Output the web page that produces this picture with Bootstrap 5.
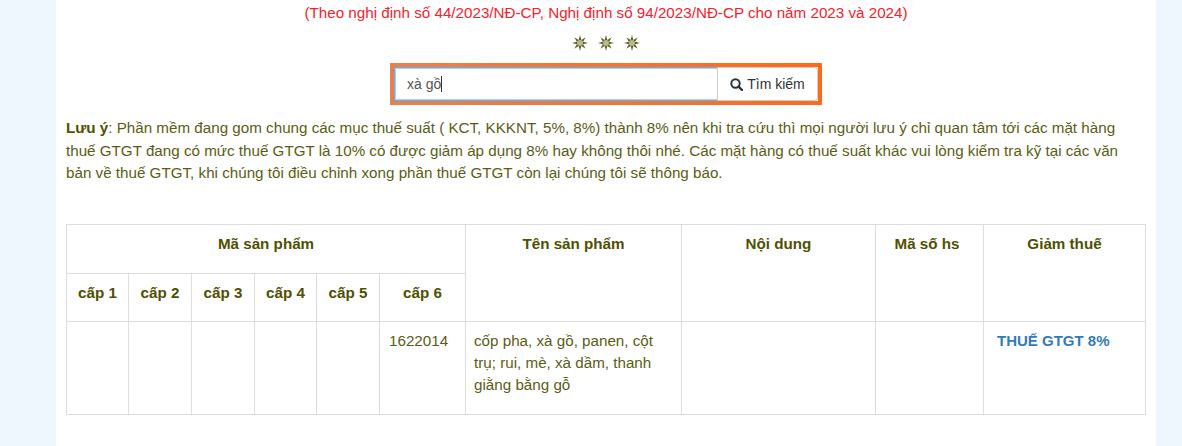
<!DOCTYPE html>
<html lang="vi">
<head>
  <meta charset="UTF-8" />
  <title>Tra cứu thuế GTGT</title>
  <link href="https://cdn.jsdelivr.net/npm/bootstrap@5.3.0/dist/css/bootstrap.min.css" rel="stylesheet" />
  <style>
    html, body { height: 446px; overflow: hidden; }
    body { background: #eff7fe; font-family: "Liberation Sans", Arial, sans-serif; font-size: 15.2px; color: #5c5d14; }
    .khung { width: 1100px; height: 446px; margin-left: 56px; background: #fff; padding: 0 10px; }
    .tieu-de { color: #f5222d; font-size: 15.2px; line-height: 20px; padding-top: 3px; text-align: center; }
    .hang-sao { gap: 10px; margin-top: 10px; height: 20px; }
    .hop-tim { width: 432px; height: 42px; margin: 10px auto 0; border: 4px solid; border-image: linear-gradient(90deg, #e8804d, #ff6a1a) 1; }
    .hop-tim .input-group { height: 34px; }
    .o-nhap { height: 34px; border-radius: 0; border: 1px solid #66afe9; border-right: 0; font-size: 14px; color: #555; padding: 4px 12px; box-shadow: inset 0 0 0 1px #a9d2f1; caret-color: transparent; }
    .o-nhap:focus { border-color: #66afe9; box-shadow: inset 0 0 0 1px #a9d2f1; }
    .con-tro { position: absolute; left: 48px; top: 9px; width: 1px; height: 16px; background: #333; z-index: 5; }
    .nut-tim { width: 101px; height: 34px; padding: 0; font-size: 14px; color: #333; background: #fff; border: 1px solid #ccc; border-radius: 0 4px 4px 0; }
    .luu-y { margin: 12px 0 0; line-height: 22.5px; font-size: 15.2px; }
    .luu-y strong { color: #4f5000; }
    .bang-sp { width: 1079px; margin: 39px 0 0; table-layout: fixed; --bs-table-color: #5c5d14; --bs-table-border-color: #ddd; }
    .bang-sp th, .bang-sp td { padding: 8px 9px; line-height: 22px; font-size: 15.2px; vertical-align: top; }
    .bang-sp th { text-align: center; font-weight: 700; color: #4f5000; }
    .bang-sp .dong-1 th { height: 49px; }
    .bang-sp .dong-2 th { height: 48px; }
    .bang-sp .dong-3 td { height: 93px; }
    .bang-sp .o-ten { padding-left: 8px; }
    .bang-sp .o-hs { padding-right: 14px; }
    .bang-sp .thue-xanh { color: #337ab7; font-weight: 700; font-size: 15px; padding-left: 13px; }
  </style>
</head>
<body>
  <div class="khung">
    <div class="tieu-de">(Theo nghị định số 44/2023/NĐ-CP, Nghị định số 94/2023/NĐ-CP cho năm 2023 và 2024)</div>

    <div class="hang-sao d-flex justify-content-center align-items-center">
      <svg width="16" height="16" viewBox="0 0 16 16"><path d="M8 0l1.300 4.900L13.700 2.300 11.100 6.700 16 8l-4.900 1.300 2.600 4.400-4.400-2.600L8 16l-1.300-4.900-4.400 2.600 2.600-4.400L0 8l4.900-1.300L2.300 2.300l4.400 2.600z" fill="#5f5f28"/><circle cx="8" cy="8" r="3" fill="#b9b990"/></svg>
      <svg width="16" height="16" viewBox="0 0 16 16"><path d="M8 0l1.300 4.900L13.700 2.300 11.100 6.700 16 8l-4.900 1.300 2.600 4.400-4.400-2.600L8 16l-1.300-4.900-4.400 2.600 2.600-4.400L0 8l4.900-1.300L2.300 2.300l4.400 2.600z" fill="#5f5f28"/><circle cx="8" cy="8" r="3" fill="#b9b990"/></svg>
      <svg width="16" height="16" viewBox="0 0 16 16"><path d="M8 0l1.300 4.900L13.700 2.300 11.100 6.700 16 8l-4.900 1.300 2.600 4.400-4.400-2.600L8 16l-1.300-4.900-4.400 2.600 2.600-4.400L0 8l4.900-1.300L2.300 2.300l4.400 2.600z" fill="#5f5f28"/><circle cx="8" cy="8" r="3" fill="#b9b990"/></svg>
    </div>

    <div class="hop-tim">
      <div class="input-group flex-nowrap position-relative">
        <input type="text" class="form-control o-nhap" value="xà gồ" />
        <span class="con-tro"></span>
        <button type="button" class="btn nut-tim d-flex align-items-center justify-content-center gap-1">
          <svg width="13" height="13" viewBox="0 0 13 13"><circle cx="5.500" cy="5.500" r="4.200" fill="none" stroke="#27333f" stroke-width="2"/><path d="M8.600 8.600l3.400 3.400" stroke="#27333f" stroke-width="2.400" stroke-linecap="round"/></svg>
          Tìm kiếm
        </button>
      </div>
    </div>

    <p class="luu-y"><strong>Lưu ý</strong>: Phần mềm đang gom chung các mục thuế suất ( KCT, KKKNT, 5%, 8%) thành 8% nên khi tra cứu thì mọi người lưu ý chỉ quan tâm tới các mặt hàng thuế GTGT đang có mức thuế GTGT là 10% có được giảm áp dụng 8% hay không thôi nhé. Các mặt hàng có thuế suất khác vui lòng kiểm tra kỹ tại các văn bản về thuế GTGT, khi chúng tôi điều chỉnh xong phần thuế GTGT còn lại chúng tôi sẽ thông báo.</p>

    <table class="table table-bordered bang-sp">
      <colgroup>
        <col style="width:62px"><col style="width:63px"><col style="width:63px"><col style="width:62px"><col style="width:63px"><col style="width:86px"><col style="width:216px"><col style="width:194px"><col style="width:108px"><col style="width:162px">
      </colgroup>
      <thead>
        <tr class="dong-1">
          <th colspan="6">Mã sản phẩm</th>
          <th rowspan="2">Tên sản phẩm</th>
          <th rowspan="2">Nội dung</th>
          <th rowspan="2" class="o-hs">Mã số hs</th>
          <th rowspan="2">Giảm thuế</th>
        </tr>
        <tr class="dong-2">
          <th>cấp 1</th><th>cấp 2</th><th>cấp 3</th><th>cấp 4</th><th>cấp 5</th><th>cấp 6</th>
        </tr>
      </thead>
      <tbody>
        <tr class="dong-3">
          <td></td><td></td><td></td><td></td><td></td>
          <td>1622014</td>
          <td class="o-ten">cốp pha, xà gồ, panen, cột trụ; rui, mè, xà dầm, thanh giằng bằng gỗ</td>
          <td></td><td></td>
          <td class="thue-xanh">THUẾ GTGT 8%</td>
        </tr>
      </tbody>
    </table>
  </div>
</body>
</html>
